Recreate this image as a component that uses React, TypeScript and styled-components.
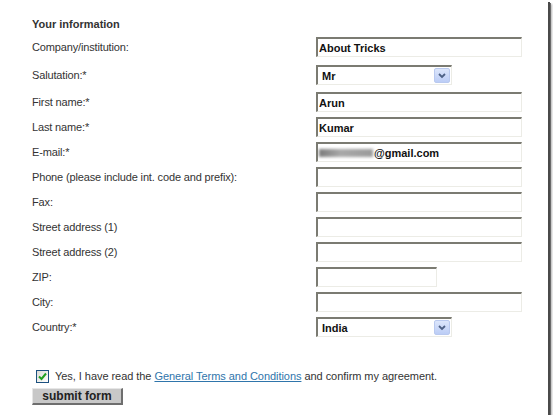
import React from "react";
import styled, { createGlobalStyle } from "styled-components";

const GlobalStyle = createGlobalStyle`
  html, body { margin: 0; padding: 0; background: #ffffff; }
  body { font-family: "Liberation Sans", Arial, sans-serif; }
`;

const Frame = styled.div`
  width: 548px;
  height: 415px;
  box-sizing: border-box;
  background: #ffffff;
  box-shadow: 2px 2px 0 #4a4a4a, 3px 3px 0 #6a6a6a, 4px 4px 2px rgba(0, 0, 0, 0.3);
  padding: 18px 0 0 32px;
  display: flex;
  flex-direction: column;
  color: #333333;
  font-size: 11px;
`;

const Heading = styled.div`
  font-weight: bold;
  font-size: 11px;
  line-height: 13px;
  height: 19px;
  color: #333333;
`;

const Row = styled.div<{ $h: number }>`
  display: grid;
  grid-template-columns: 284px 1fr;
  height: ${(p) => p.$h}px;
  align-items: start;
`;

const Label = styled.div`
  line-height: 20px;
  height: 20px;
  white-space: nowrap;
  letter-spacing: -0.15px;
`;

const fieldBase = `
  box-sizing: border-box;
  height: 20px;
  border-style: solid;
  border-width: 2px 1px 1px 2px;
  border-color: #7b7b72 #ecece6 #ecece6 #7b7b72;
  background: #ffffff;
  font-family: "Liberation Sans", Arial, sans-serif;
  font-weight: bold;
  font-size: 11px;
  color: #111111;
  padding: 0 0 0 1px;
  margin: 0;
  outline: none;
`;

const TextInput = styled.input<{ $w?: number }>`
  ${fieldBase}
  width: ${(p) => p.$w ?? 206}px;
  display: block;
`;

const FakeInput = styled.div`
  ${fieldBase}
  width: 206px;
  display: flex;
  align-items: center;
  line-height: 16px;
`;

const Blurred = styled.span`
  display: inline-block;
  width: 54px;
  height: 8px;
  background: linear-gradient(90deg, #7a7a7a, #a8a8a8 40%, #9a9a9a);
  filter: blur(1.8px);
  margin-right: 1px;
`;

const Select = styled.div`
  ${fieldBase}
  width: 136px;
  display: flex;
  align-items: center;
  justify-content: space-between;
  padding: 0 1px 0 4px;
`;

const ArrowBtn = styled.span`
  width: 16px;
  height: 15px;
  box-sizing: border-box;
  border: 1px solid #b9c9ef;
  border-radius: 2px;
  background: linear-gradient(#dce6fb, #bccdf6);
  display: flex;
  align-items: center;
  justify-content: center;
`;

const Agree = styled.div`
  display: flex;
  align-items: center;
  margin-top: 32px;
  margin-left: 4px;
  height: 14px;
  gap: 6px;
  white-space: nowrap;
  letter-spacing: -0.05px;
`;

const Check = styled.span`
  width: 13px;
  height: 13px;
  box-sizing: border-box;
  border: 1px solid #1c5180;
  background: linear-gradient(135deg, #dcdcd6, #ffffff);
  display: flex;
  align-items: center;
  justify-content: center;
`;

const Link = styled.a`
  color: #2f75ab;
  text-decoration: underline;
`;

const Submit = styled.button`
  margin-top: 5px;
  width: 91px;
  height: 17px;
  box-sizing: border-box;
  background: #c8c8c8;
  border-style: solid;
  border-width: 1px 2px 2px 1px;
  border-color: #e6e6e6 #6e6e6e #6e6e6e #e6e6e6;
  font-family: "Liberation Sans", Arial, sans-serif;
  font-weight: bold;
  font-size: 12px;
  color: #222222;
  padding: 0;
  line-height: 13px;
  cursor: pointer;
`;

const Chevron = () => (
  <svg width="8" height="6" viewBox="0 0 8 6">
    <path d="M1 1 L4 4 L7 1" fill="none" stroke="#4d6185" strokeWidth="1.8" />
  </svg>
);

const Tick = () => (
  <svg width="9" height="9" viewBox="0 0 9 9">
    <path d="M1 4.5 L3.5 7 L8 1.5" fill="none" stroke="#21a121" strokeWidth="2" />
  </svg>
);

type F = { label: string; w?: number };

const rows: F[] = [
  { label: "Phone (please include int. code and prefix):" },
  { label: "Fax:" },
  { label: "Street address (1)" },
  { label: "Street address (2)" },
  { label: "ZIP:", w: 121 },
  { label: "City:" },
];

export default function App() {
  return (
    <>
      <GlobalStyle />
      <Frame>
        <Heading>Your information</Heading>
        <Row $h={28}>
          <Label>Company/institution:</Label>
          <TextInput readOnly value="About Tricks" />
        </Row>
        <Row $h={27}>
          <Label>Salutation:*</Label>
          <Select>
            <span>Mr</span>
            <ArrowBtn>
              <Chevron />
            </ArrowBtn>
          </Select>
        </Row>
        <Row $h={25}>
          <Label>First name:*</Label>
          <TextInput readOnly value="Arun" />
        </Row>
        <Row $h={25}>
          <Label>Last name:*</Label>
          <TextInput readOnly value="Kumar" />
        </Row>
        <Row $h={25}>
          <Label>E-mail:*</Label>
          <FakeInput>
            <Blurred />
            @gmail.com
          </FakeInput>
        </Row>
        {rows.map((r) => (
          <Row $h={25} key={r.label}>
            <Label>{r.label}</Label>
            <TextInput readOnly value="" $w={r.w} />
          </Row>
        ))}
        <Row $h={20}>
          <Label>Country:*</Label>
          <Select>
            <span>India</span>
            <ArrowBtn>
              <Chevron />
            </ArrowBtn>
          </Select>
        </Row>
        <Agree>
          <Check>
            <Tick />
          </Check>
          <span>
            Yes, I have read the <Link href="#">General Terms and Conditions</Link> and confirm my
            agreement.
          </span>
        </Agree>
        <Submit>submit form</Submit>
      </Frame>
    </>
  );
}
